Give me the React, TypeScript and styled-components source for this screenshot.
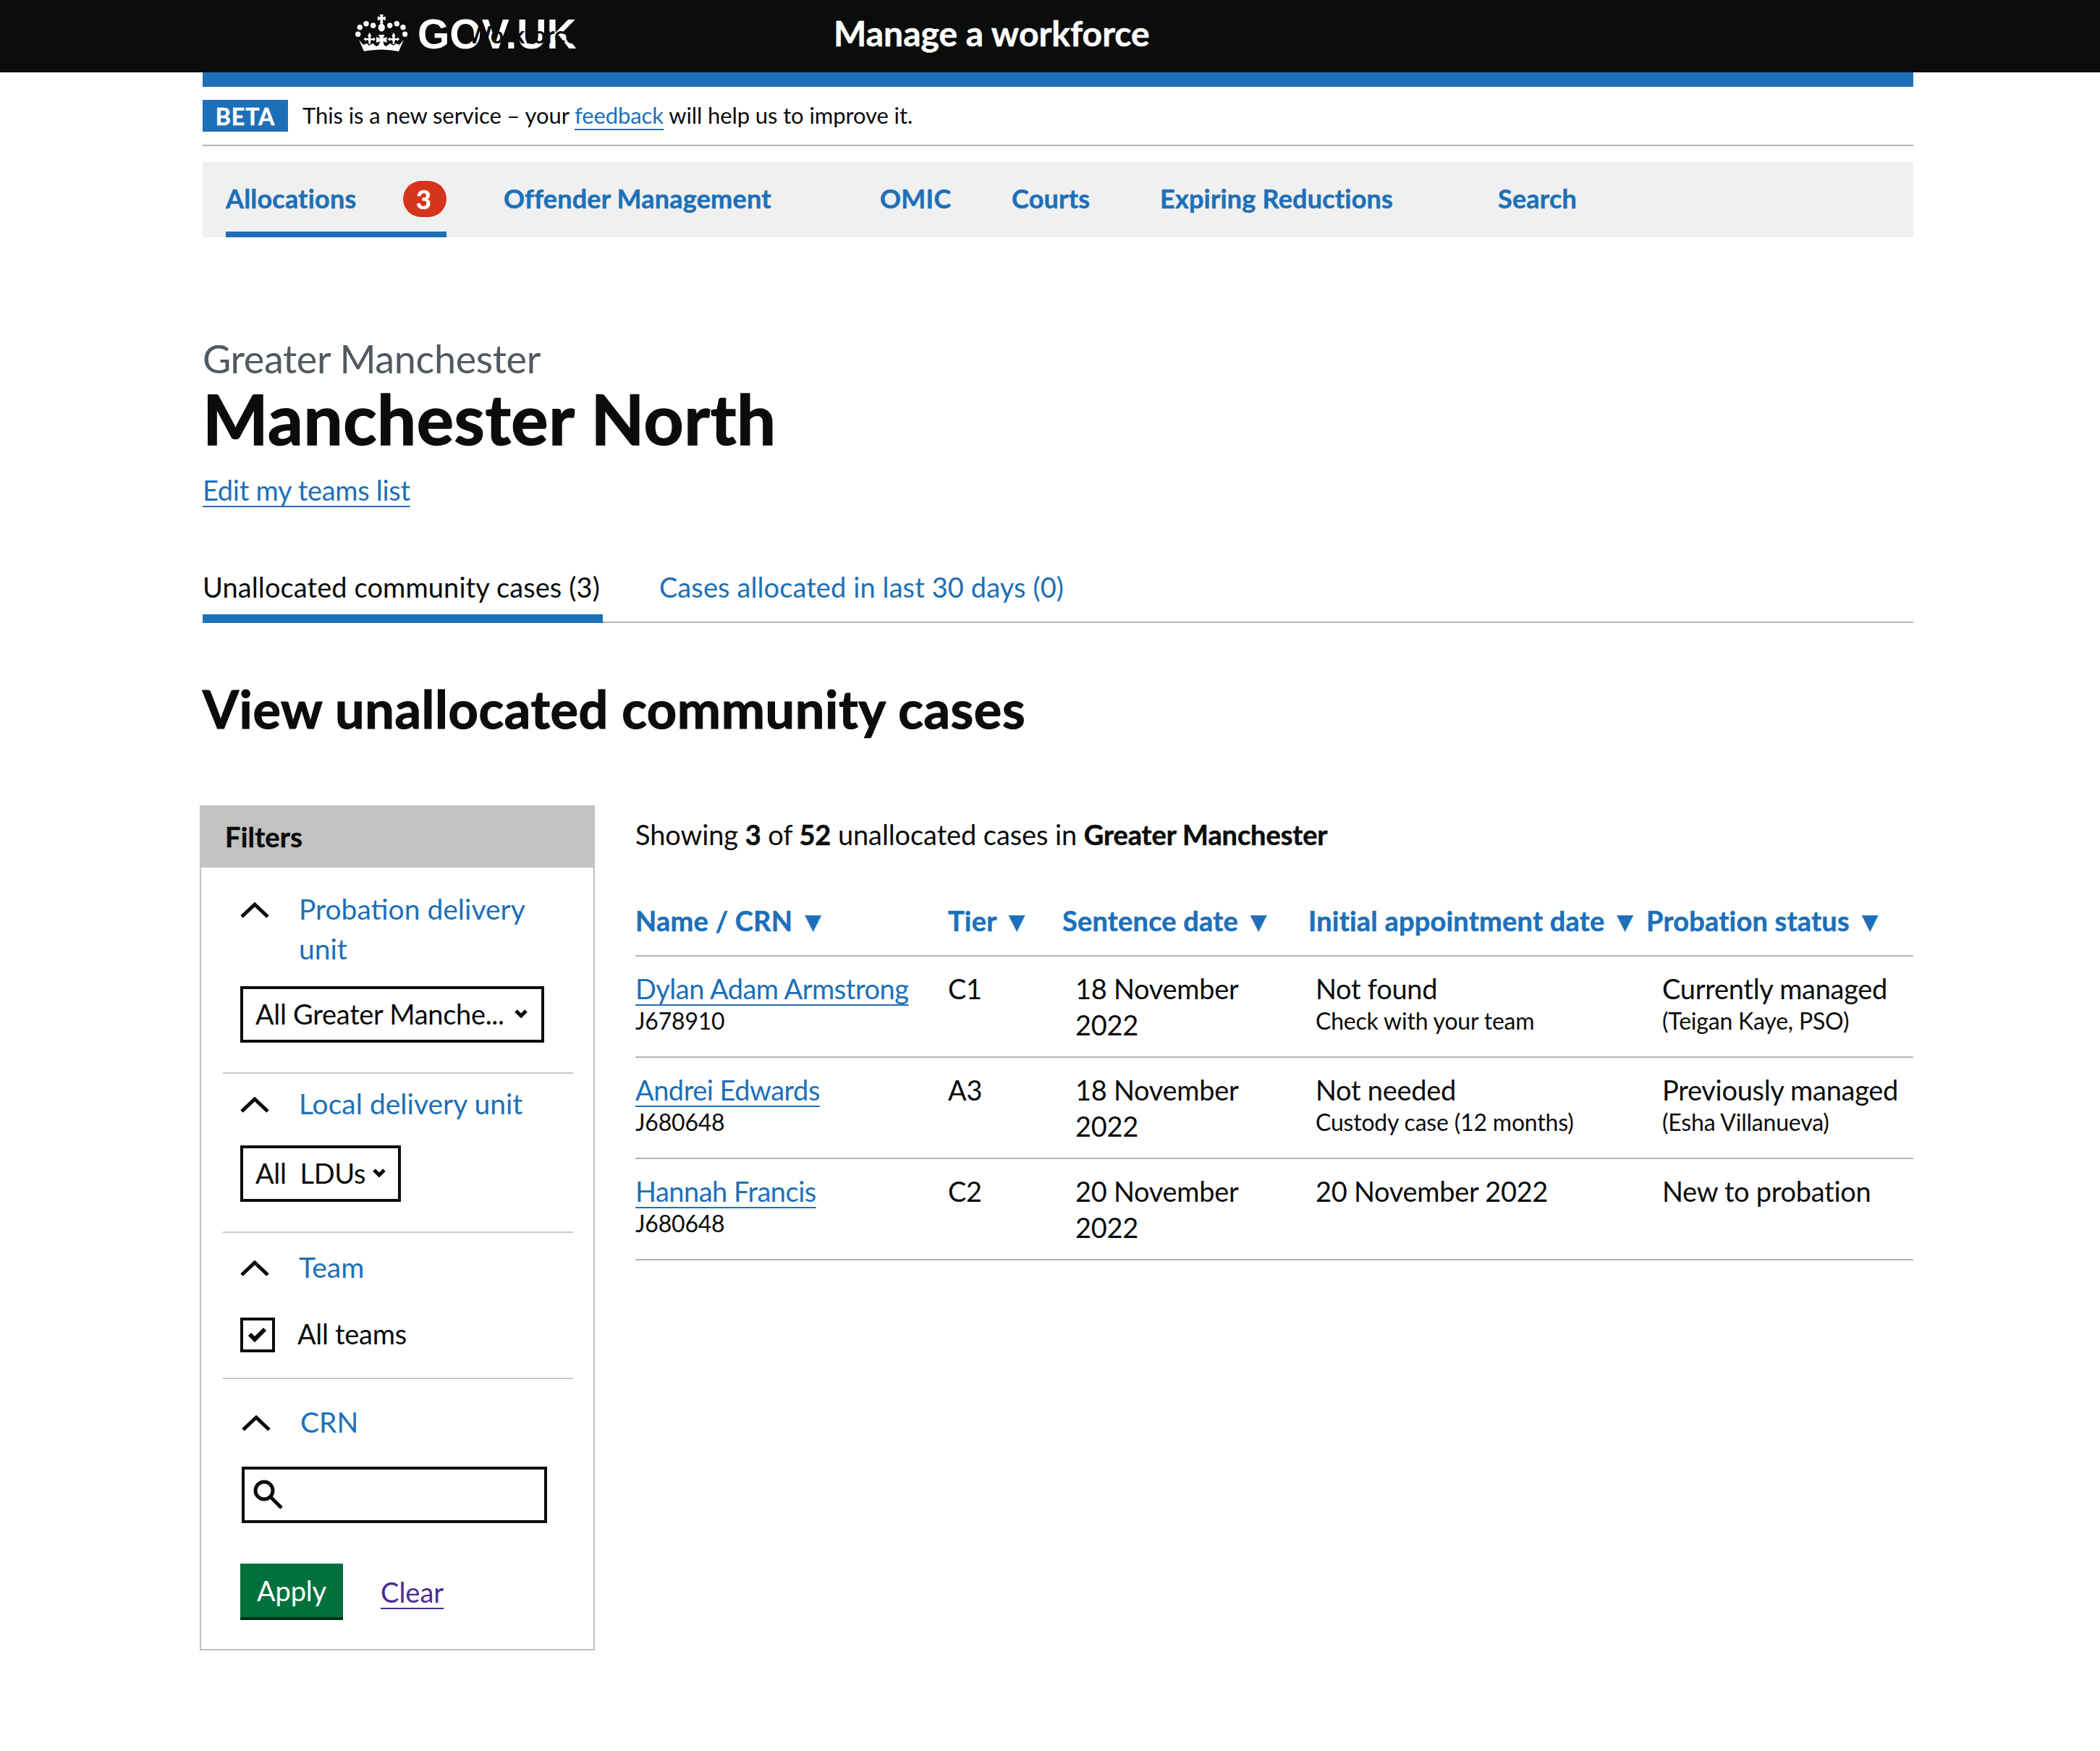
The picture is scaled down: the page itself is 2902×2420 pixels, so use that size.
import React from "react";
import styled, { createGlobalStyle } from "styled-components";

const GlobalStyle = createGlobalStyle`
  html, body {
    margin: 0;
    padding: 0;
    background: #fff;
    color: #0b0c0c;
    font-family: "Lato", "Liberation Sans", sans-serif;
  }
  * { box-sizing: border-box; }
  b { -webkit-text-stroke: 0.5px currentColor; }
`;

const Blue = "#1d70b8";

const Header = styled.header`
  height: 100px;
  background: #0b0c0c;
  display: flex;
  align-items: center;
  padding: 0 0 6px 491px;
`;

const Logo = styled.div`
  display: flex;
  align-items: center;
  width: 661px;
  gap: 14px;
`;

const LogoText = styled.span`
  position: relative;
  color: #fff;
  font-family: "Liberation Sans", sans-serif;
  font-weight: 700;
  font-size: 57px;
  line-height: 1;
`;

const LogoBleed = styled.span`
  position: absolute;
  left: 69px;
  top: 9px;
  color: #0b0c0c;
  font-family: "Lato", sans-serif;
  font-weight: 700;
  font-size: 32px;
  line-height: 40px;
`;

const ServiceName = styled.span`
  color: #fff;
  font-weight: 700;
  font-size: 48px;
  margin-top: -4px;
  -webkit-text-stroke: 0.5px currentColor;
`;

const Container = styled.div`
  width: 2364px;
  margin-left: 280px;
`;

const BlueBar = styled.div`
  height: 20px;
  background: ${Blue};
`;

const PhaseBanner = styled.div`
  display: flex;
  align-items: center;
  gap: 20px;
  height: 82px;
  border-bottom: 2px solid #b1b4b6;
  font-size: 31px;
  letter-spacing: -0.1px;

  span {
    margin-top: -2px;
  }
`;

const Tag = styled.strong`
  background: ${Blue};
  color: #fff;
  width: 118px;
  height: 44px;
  display: flex;
  align-items: center;
  justify-content: center;
  font-size: 32px;
  letter-spacing: 1px;
  -webkit-text-stroke: 0.5px currentColor;
`;

const Link = styled.a<{ $visited?: boolean }>`
  color: ${(p) => (p.$visited ? "#4c2c92" : Blue)};
  text-decoration: underline;
  text-decoration-thickness: 2px;
  text-underline-offset: 7px;
`;

const Nav = styled.nav`
  margin-top: 22px;
  height: 104px;
  background: #f0f0f0;
  display: flex;
  padding-left: 32px;
`;

const NavItem = styled.a<{ $active?: boolean; $width: number }>`
  width: ${(p) => p.$width}px;
  height: 104px;
  display: flex;
  align-items: center;
  justify-content: space-between;
  color: ${Blue};
  font-size: 36px;
  font-weight: 700;
  letter-spacing: 0.2px;
  -webkit-text-stroke: 0.5px currentColor;
  flex: none;
  border-bottom: 8px solid ${(p) => (p.$active ? Blue : "transparent")};
  padding-top: 3px;
`;

const Badge = styled.span`
  width: 60px;
  height: 50px;
  margin-top: 3px;
  border-radius: 25px;
  background: #d4351c;
  color: #fff;
  font-size: 36px;
  display: flex;
  align-items: center;
  justify-content: center;
  padding-right: 3px;
`;

const Caption = styled.div`
  margin-top: 138px;
  font-size: 54px;
  line-height: 60px;
  letter-spacing: -0.4px;
  color: #505a5f;
`;

const Title = styled.h1`
  margin: 0;
  font-size: 96px;
  line-height: 104px;
  font-weight: 700;
  letter-spacing: 0.6px;
  -webkit-text-stroke: 1.5px currentColor;
`;

const EditLink = styled(Link)`
  display: inline-block;
  margin-top: 22px;
  font-size: 38px;
  line-height: 50px;
  letter-spacing: -0.3px;
`;

const Tabs = styled.div`
  display: flex;
  margin-top: 73px;
  height: 86px;
  border-bottom: 2px solid #b1b4b6;
  gap: 78px;
  font-size: 38px;
  letter-spacing: 0.1px;
`;

const Tab = styled.a<{ $active?: boolean }>`
  height: 86px;
  padding: 11px ${(p) => (p.$active ? "4px" : "0")} 0 0;
  line-height: 50px;
  color: ${(p) => (p.$active ? "#0b0c0c" : Blue)};
  border-bottom: ${(p) => (p.$active ? `12px solid ${Blue}` : "none")};
`;

const Heading = styled.h2`
  margin: 74px 0 0;
  font-size: 72px;
  line-height: 88px;
  font-weight: 700;
  letter-spacing: 0.6px;
  -webkit-text-stroke: 1.2px currentColor;
`;

const Content = styled.div`
  display: flex;
  margin: 90px 0 0 -4px;
`;

const FilterPanel = styled.aside`
  width: 546px;
  height: 1168px;
  border: 2px solid #bfc1c3;
  flex: none;
`;

const FilterHeader = styled.div`
  height: 86px;
  margin: -2px -2px 0;
  background: #c2c2c2;
  font-size: 38px;
  font-weight: 700;
  letter-spacing: 0.2px;
  -webkit-text-stroke: 0.5px currentColor;
  padding-left: 35px;
  display: flex;
  align-items: center;
`;

const FilterSection = styled.section<{ $height: number; $last?: boolean }>`
  height: ${(p) => p.$height}px;
  margin: 0 28px 0 30px;
  padding: 0 0 0 24px;
  border-bottom: ${(p) => (p.$last ? "none" : "2px solid #c8c8c8")};
`;

const SectionHead = styled.div<{ $top: number; $nudge?: number }>`
  display: grid;
  grid-template-columns: 40px auto;
  column-gap: 41px;
  padding-top: ${(p) => p.$top}px;
  margin-left: ${(p) => p.$nudge ?? 0}px;
  color: ${Blue};
  font-size: 39px;
  line-height: 56px;

  svg {
    margin-top: 16px;
  }

  span {
    margin-top: -2px;
    line-height: 55px;
  }
`;

const SelectBox = styled.div<{ $width: number; $top: number }>`
  width: ${(p) => p.$width}px;
  height: 78px;
  margin-top: ${(p) => p.$top}px;
  border: 4px solid #0b0c0c;
  padding: 0 19px 2px 17px;
  display: flex;
  align-items: center;
  justify-content: space-between;
  font-size: 38px;
  letter-spacing: -0.3px;
  white-space: pre;

  svg {
    flex: none;
  }
`;

const CheckRow = styled.label`
  display: flex;
  align-items: center;
  gap: 31px;
  margin-top: 42px;
  font-size: 38px;
  letter-spacing: -0.3px;

  span + span {
    margin-top: -5px;
  }
`;

const CheckBox = styled.span`
  width: 48px;
  height: 48px;
  border: 4px solid #0b0c0c;
  display: flex;
  align-items: center;
  justify-content: center;
`;

const SearchBox = styled.div`
  width: 422px;
  height: 78px;
  margin: 34px 0 0 2px;
  border: 4px solid #0b0c0c;
  padding-left: 12px;
  display: flex;
  align-items: center;
`;

const Actions = styled.div`
  display: flex;
  align-items: center;
  gap: 52px;
  margin-top: 56px;
`;

const ApplyButton = styled.button`
  width: 142px;
  height: 78px;
  border: none;
  border-bottom: 4px solid #002d18;
  background: #00703c;
  color: #fff;
  font-family: inherit;
  font-size: 38px;
  letter-spacing: -0.2px;
  padding: 0;
`;

const ClearLink = styled(Link)`
  font-size: 38px;
`;

const Results = styled.div`
  margin-left: 56px;
  flex: 1;
`;

const Summary = styled.div`
  font-size: 38px;
  line-height: 50px;
  margin-top: 15px;
  letter-spacing: -0.1px;
`;

const Table = styled.table`
  border-collapse: collapse;
  table-layout: fixed;
  width: 1766px;
  margin-top: 53px;
`;

const Col = styled.col<{ $width: number }>`
  width: ${(p) => p.$width}px;
`;

const HeadCell = styled.th<{ $shift?: number }>`
  height: 90px;
  padding: 0 0 6px;
  text-align: left;
  color: ${Blue};
  font-size: 38px;
  font-weight: 700;
  letter-spacing: 0.2px;
  -webkit-text-stroke: 0.5px currentColor;
  white-space: nowrap;
  border-bottom: 2px solid #b1b4b6;

  span {
    margin-left: ${(p) => p.$shift ?? 0}px;
  }
`;

const Row = styled.tr`
  height: 140px;
  border-bottom: 2px solid #b1b4b6;
`;

const Cell = styled.td<{ $nowrap?: boolean }>`
  padding: 19px 20px 18px 0;
  vertical-align: top;
  font-size: 38px;
  line-height: 50px;
  letter-spacing: -0.3px;
  white-space: ${(p) => (p.$nowrap ? "nowrap" : "normal")};
`;

const CaseLink = styled(Link)`
  letter-spacing: -0.5px;
`;

const SubText = styled.div`
  font-size: 32px;
  line-height: 44px;
  margin-top: -2px;
  letter-spacing: -0.2px;
`;

const Chevron = () => (
  <svg width="40" height="22" viewBox="0 0 40 22">
    <path d="M2 20 L20 3 L38 20" fill="none" stroke="#0b0c0c" strokeWidth="5" />
  </svg>
);

const SmallChevron = () => (
  <svg width="18" height="12" viewBox="0 0 18 12">
    <path d="M2 2 L9 9 L16 2" fill="none" stroke="#0b0c0c" strokeWidth="5" />
  </svg>
);

const Crown = () => (
  <svg width="72" height="54" viewBox="0 0 72 54" fill="#fff">
    <path d="M33.8 0H38.8L37.8 3.7L41.8 2.8V8.2L37.8 7L38.500 12H34.100L34.800 7L30.800 8.200V2.800L34.800 3.700Z" />
    <path d="M36.300 11L40 15C42 18 40.500 23.400 36.300 23.400C32.100 23.400 30.600 18 32.600 15Z" />
    <circle cx="24.700" cy="15.300" r="3.700" />
    <circle cx="15" cy="12.700" r="3.700" />
    <circle cx="6.300" cy="17.700" r="3.700" />
    <circle cx="3.700" cy="27.300" r="3.700" />
    <circle cx="47.700" cy="15.300" r="3.700" />
    <circle cx="57.300" cy="12.700" r="3.700" />
    <circle cx="66" cy="17.700" r="3.700" />
    <circle cx="68.700" cy="27.300" r="3.700" />
    <path d="M19.700 25L22 29L20.900 33H25V31.500L28 34L25 37V35.500H21.500L20.700 41H18.700L18 35.500H14.500V37L11.500 34L14.500 31.500V33H18.500L17.400 29Z" />
    <path d="M52.900 25L55.200 29L54.100 33H58.200V31.500L61.200 34L58.200 37V35.500H54.700L53.900 41H51.900L51.200 35.500H47.700V37L44.700 34L47.700 31.500V33H51.700L50.600 29Z" />
    <path d="M32 28H40.600L38.300 33L43.500 31V39L38.300 37L40 43H32L34.300 37L29 39V31L34.300 33Z" />
    <path d="M5 35L11 42L16 40L19 43L24 40L29 44L36 41L43 44L48 40L53 43L56 40L61 42L67 35L60 51Q36 46 12 51Z" />
  </svg>
);

const CASES = [
  {
    name: "Dylan Adam Armstrong",
    crn: "J678910",
    tier: "C1",
    sentence: "18 November 2022",
    appointment: "Not found",
    appointmentNote: "Check with your team",
    status: "Currently managed",
    statusNote: "(Teigan Kaye, PSO)",
  },
  {
    name: "Andrei Edwards",
    crn: "J680648",
    tier: "A3",
    sentence: "18 November 2022",
    appointment: "Not needed",
    appointmentNote: "Custody case (12 months)",
    status: "Previously managed",
    statusNote: "(Esha Villanueva)",
  },
  {
    name: "Hannah Francis",
    crn: "J680648",
    tier: "C2",
    sentence: "20 November 2022",
    appointment: "20 November 2022",
    status: "New to probation",
  },
];

const App = () => {
  return (
    <>
      <GlobalStyle />
      <Header>
        <Logo>
          <Crown />
          <LogoText>
            GOV.UK
            <LogoBleed aria-hidden="true">Workforce</LogoBleed>
          </LogoText>
        </Logo>
        <ServiceName>Manage a workforce</ServiceName>
      </Header>
      <Container>
        <BlueBar />
        <PhaseBanner>
          <Tag>BETA</Tag>
          <span>
            This is a new service – your <Link>feedback</Link> will help us to improve it.
          </span>
        </PhaseBanner>
        <Nav>
          <NavItem $active $width={305}>
            Allocations <Badge>3</Badge>
          </NavItem>
          <NavItem $width={79} />
          <NavItem $width={520}>Offender Management</NavItem>
          <NavItem $width={182}>OMIC</NavItem>
          <NavItem $width={205}>Courts</NavItem>
          <NavItem $width={467}>Expiring Reductions</NavItem>
          <NavItem $width={200}>Search</NavItem>
        </Nav>
        <Caption>Greater Manchester</Caption>
        <Title>Manchester North</Title>
        <EditLink>Edit my teams list</EditLink>
        <Tabs>
          <Tab $active>Unallocated community cases (3)</Tab>
          <Tab>Cases allocated in last 30 days (0)</Tab>
        </Tabs>
        <Heading>View unallocated community cases</Heading>
        <Content>
          <FilterPanel>
            <FilterHeader>Filters</FilterHeader>
            <FilterSection $height={285}>
              <SectionHead $top={32}>
                <Chevron />
                <span>
                  Probation delivery
                  <br />
                  unit
                </span>
              </SectionHead>
              <SelectBox $width={420} $top={24}>
                All Greater Manche... <SmallChevron />
              </SelectBox>
            </FilterSection>
            <FilterSection $height={220}>
              <SectionHead $top={16}>
                <Chevron />
                <span>Local delivery unit</span>
              </SectionHead>
              <SelectBox $width={222} $top={30}>
                All  LDUs <SmallChevron />
              </SelectBox>
            </FilterSection>
            <FilterSection $height={202}>
              <SectionHead $top={22}>
                <Chevron />
                <span>Team</span>
              </SectionHead>
              <CheckRow>
                <CheckBox>
                  <svg width="28" height="22" viewBox="0 0 28 22">
                    <path d="M3 10 L10 17 L24 3" fill="none" stroke="#0b0c0c" strokeWidth="6" />
                  </svg>
                </CheckBox>
                <span>All teams</span>
              </CheckRow>
            </FilterSection>
            <FilterSection $height={375} $last>
              <SectionHead $top={34} $nudge={2}>
                <Chevron />
                <span>CRN</span>
              </SectionHead>
              <SearchBox>
                <svg width="42" height="42" viewBox="0 0 42 42">
                  <circle cx="15" cy="15" r="12" fill="none" stroke="#0b0c0c" strokeWidth="5" />
                  <path d="M24 24 L39 39" stroke="#0b0c0c" strokeWidth="5" />
                </svg>
              </SearchBox>
              <Actions>
                <ApplyButton>Apply</ApplyButton>
                <ClearLink $visited>Clear</ClearLink>
              </Actions>
            </FilterSection>
          </FilterPanel>
          <Results>
            <Summary>
              Showing <b>3</b> of <b>52</b> unallocated cases in <b>Greater Manchester</b>
            </Summary>
            <Table>
              <colgroup>
                <Col $width={432} />
                <Col $width={176} />
                <Col $width={332} />
                <Col $width={479} />
                <Col $width={347} />
              </colgroup>
              <thead>
                <tr>
                  <HeadCell><span>Name / CRN ▼</span></HeadCell>
                  <HeadCell><span>Tier ▼</span></HeadCell>
                  <HeadCell $shift={-18}><span>Sentence date ▼</span></HeadCell>
                  <HeadCell $shift={-10}><span>Initial appointment date ▼</span></HeadCell>
                  <HeadCell $shift={-22}><span>Probation status ▼</span></HeadCell>
                </tr>
              </thead>
              <tbody>
                {CASES.map((c) => (
                  <Row key={c.name}>
                    <Cell $nowrap>
                      <CaseLink>{c.name}</CaseLink>
                      <SubText>{c.crn}</SubText>
                    </Cell>
                    <Cell>{c.tier}</Cell>
                    <Cell>{c.sentence}</Cell>
                    <Cell>
                      {c.appointment}
                      {c.appointmentNote && <SubText>{c.appointmentNote}</SubText>}
                    </Cell>
                    <Cell $nowrap>
                      {c.status}
                      {c.statusNote && <SubText>{c.statusNote}</SubText>}
                    </Cell>
                  </Row>
                ))}
              </tbody>
            </Table>
          </Results>
        </Content>
      </Container>
    </>
  );
};

export default App;
